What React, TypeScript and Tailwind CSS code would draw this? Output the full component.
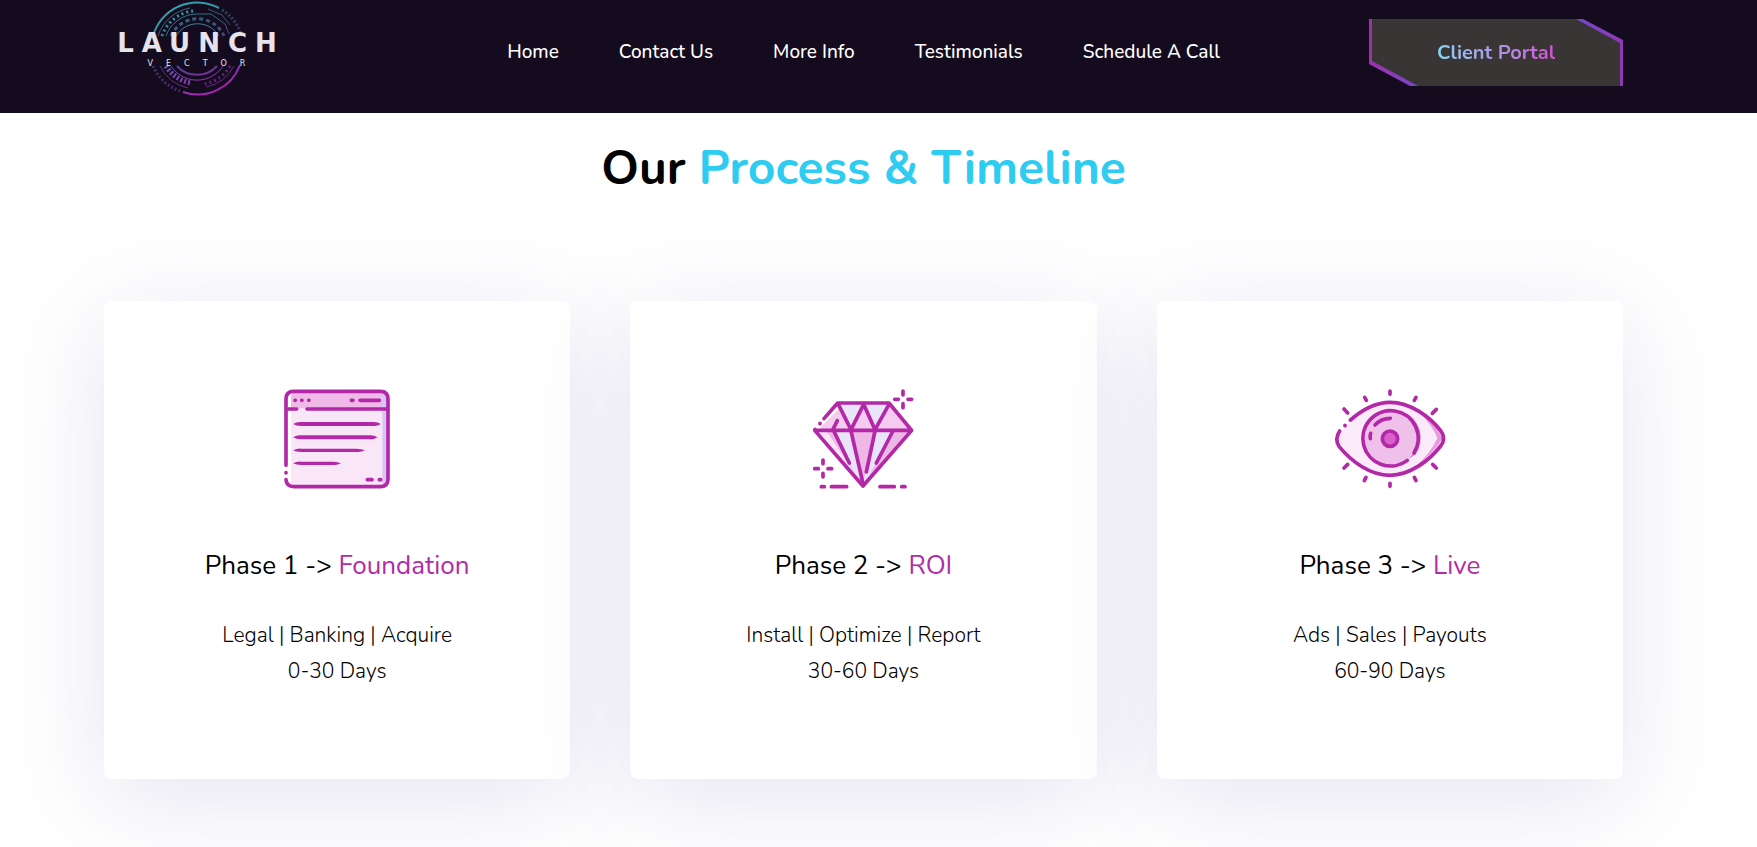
import type { ReactNode } from 'react';

interface Phase {
  title: string;
  highlight: string;
  steps: string;
  days: string;
  icon: ReactNode;
}

const NAV_LINKS = ['Home', 'Contact Us', 'More Info', 'Testimonials', 'Schedule A Call'];

function Logo() {
  return (
    <svg width="184" height="97" viewBox="0 0 184 97" role="img" aria-label="Launch Vector">
      <defs>
        <linearGradient id="ring" gradientUnits="userSpaceOnUse" x1="70" y1="4" x2="110" y2="94">
          <stop offset="0" stopColor="#2fa9b5" />
          <stop offset="0.3" stopColor="#3d7f9c" />
          <stop offset="0.6" stopColor="#6a4fb0" />
          <stop offset="1" stopColor="#b01fb8" />
        </linearGradient>
      </defs>
      <g fill="none" stroke="url(#ring)">
        {/* Top half */}
        <path d="M49 36a46 46 0 0 1 66-28" strokeWidth="2" />
        <path d="M118 10a45 45 0 0 1 19 24" strokeWidth="3" strokeDasharray="2 2" opacity="0.5" />
        <path d="M54 36a41 41 0 0 1 32-28M104 9l14 6 8 10" strokeWidth="1" opacity="0.7" />
        <path d="M58 36a37 37 0 0 1 31-25" strokeWidth="3" strokeDasharray="2 3" />
        <path d="M62 36a33 33 0 0 1 31-22h14l14 10 4 10" strokeWidth="1" opacity="0.8" />
        <path d="M67 36a29 29 0 0 1 53 0" strokeWidth="3" strokeDasharray="4 3" opacity="0.7" />
        <path d="M72 36a25 25 0 0 1 43 0" strokeWidth="1" />
        {/* Bottom half */}
        <path d="M136 65a45 45 0 0 1-57 27" strokeWidth="2" />
        <path d="M49 66a45 45 0 0 0 27 25" strokeWidth="3" strokeDasharray="2 2" opacity="0.5" />
        <path d="M130 66a41 41 0 0 1-28 21M56 66a41 41 0 0 0 28 22" strokeWidth="1" opacity="0.7" />
        <path d="M126 66a37 37 0 0 1-26 18" strokeWidth="3" strokeDasharray="2 3" opacity="0.6" />
        <path d="M62 66a36 36 0 0 0 26 17" strokeWidth="5" strokeDasharray="2 2" />
        <path d="M67 66a31 31 0 0 0 52 0" strokeWidth="1" />
        <path d="M73 66a27 27 0 0 0 40 0" strokeWidth="2" opacity="0.8" />
      </g>
      <g fill="#e6e3ec" textAnchor="middle" className="font-['DejaVu_Sans',sans-serif]">
        <text x="97" y="52" fontSize="26" className="font-bold tracking-[8px]">LAUNCH</text>
        <text x="99" y="66" fontSize="8" className="tracking-[13px]">VECTOR</text>
      </g>
    </svg>
  );
}

function PageIcon() {
  return (
    <svg width="140" height="130" viewBox="-10 0 420 390" fill="none" aria-hidden="true">
      <rect x="62" y="50" width="290" height="284" rx="18" fill="#f9e6f7" />
      <path d="M62 100V66q0-16 16-16h256q14 0 14 16v34z" fill="#efb9e8" />
      <path d="M336 56q16 0 16 16v236q0 18-16 22z" fill="#d5c8f8" />
      <g stroke="#b328a6" strokeWidth="11" strokeLinecap="round">
        <path d="M47 271V72q0-23 23-23h260q23 0 23 23v240q0 23-23 23H70q-21 0-23-21M47 293v1M50 102h29M110 102h240" />
        <path d="M74 76h1M94 76h1M115 76h1M243 76h5M269 76h58M291 314h14M327 314h4" />
      </g>
      <path
        d="M68 147q12-7 24-6h218q12 0 22 6-12 7-22 6H92q-14 0-24-6zM68 187q12-7 24-6h208q12 0 22 6-12 7-22 6H92q-14 0-24-6zM68 226q12-6 24-5h168q12 0 24 5-12 6-24 5H92q-14 0-24-5zM68 265q12-6 24-5h98q12 0 22 5-12 6-22 5H92q-14 0-24-5z"
        fill="#b328a6"
      />
    </svg>
  );
}

function DiamondIcon() {
  return (
    <svg width="140" height="130" viewBox="-6 0 420 390" fill="none" aria-hidden="true">
      <path d="M128 85h154l68 81-146 166L66 176l70-80z" fill="#eae4fa" />
      <path d="M135 98l33 66H70zM206 90l34 74h-70zM284 88l64 76H242z" fill="#f5cbef" />
      <path d="M70 168h46l70 140zM172 168h68l-36 158zM292 168h58L214 318z" fill="#eeb8e6" />
      <path d="M66 172l130 148-100-150z" fill="#fae6f8" />
      <g stroke="#b328a6" strokeWidth="11" strokeLinecap="round" strokeLinejoin="round">
        <path d="M87 131l41-47h154l68 82-146 167L59 166h291M75 145v1M60 163v1" />
        <path d="M130 88l38 76 38-76 34 76 42-76M127 137l-13 26 49 101M168 168l36 158M240 168l-26 123M294 168l-50 96" />
        <path d="M324 48v12M324 86v12M299 73h11M339 73h11M84 255v11M84 295v11M59 281h11M99 281h11" />
        <path d="M79 335h9M109 335h46M255 335h43M320 335h10" />
      </g>
    </svg>
  );
}

function EyeIcon() {
  return (
    <svg width="140" height="130" viewBox="0 0 420 390" fill="none" aria-hidden="true">
      <path d="M52 190C90 125 150 83 210 83s120 42 162 107c-42 65-102 110-162 110S90 255 52 190z" fill="#fbeaf9" />
      <path d="M290 105q54 34 78 85-24 42-90 92 52-42 74-92-12-38-62-85z" fill="#e79ade" />
      <circle cx="210" cy="190" r="82" fill="#eec0ea" />
      <path d="M250 110a92 92 0 0 1 15 143l22-15a86 86 0 0 0-37-128z" fill="#d77bd0" />
      <circle cx="210" cy="191" r="23" fill="#d860cc" />
      <g stroke="#b328a6" strokeWidth="11" strokeLinecap="round">
        <path d="M91 135C128 103 170 82 210 82c62 0 120 44 152 85q18 24 0 46c-35 44-92 88-152 88S94 259 57 214q-14-22 2-46M75 151v1" />
        <path d="M262 256a83 83 0 1 1 20-22" />
        <circle cx="210" cy="191" r="23" />
        <path d="M165 150q18-20 46-20M152 175q-3 8-1 16" />
        <path d="M210 48v10M210 325v9M134 67l5 9M288 67l-5 9M72 102l11 12M349 103l-12 12M83 268l-11 11M338 268l11 11M138 307l-5 10M283 307l5 10" />
      </g>
    </svg>
  );
}

const PHASES: Phase[] = [
  {
    title: 'Phase 1 ->',
    highlight: 'Foundation',
    steps: 'Legal | Banking | Acquire',
    days: '0-30 Days',
    icon: <PageIcon />,
  },
  {
    title: 'Phase 2 ->',
    highlight: 'ROI',
    steps: 'Install | Optimize | Report',
    days: '30-60 Days',
    icon: <DiamondIcon />,
  },
  {
    title: 'Phase 3 ->',
    highlight: 'Live',
    steps: 'Ads | Sales | Payouts',
    days: '60-90 Days',
    icon: <EyeIcon />,
  },
];

function PortalButton() {
  return (
    <button type="button" className="relative h-[67px] w-[254px] cursor-pointer">
      {/* Cut-corner frame behind the label */}
      <svg className="absolute inset-0 size-full" viewBox="0 0 254 67" fill="none" aria-hidden="true">
        <defs>
          <linearGradient id="cut-left" x1="0" y1="0" x2="1" y2="0">
            <stop offset="0" stopColor="#a030ac" />
            <stop offset="1" stopColor="#7448cc" />
          </linearGradient>
          <linearGradient id="cut-right" x1="0" y1="0" x2="1" y2="0">
            <stop offset="0" stopColor="#7448cc" />
            <stop offset="1" stopColor="#9038b4" />
          </linearGradient>
        </defs>
        <path d="M0 0h211l43 22v45H46L0 44z" fill="#383534" />
        <path d="M0 0h3v42l46 25h-8L0 45z" fill="url(#cut-left)" />
        <path d="M207 0h7l40 21v46h-3V24z" fill="url(#cut-right)" />
      </svg>
      <span className="relative bg-gradient-to-r from-[#84d3f5] via-[#a997e8] to-[#d04fd6] bg-clip-text text-[20px] font-bold text-transparent">
        Client Portal
      </span>
    </button>
  );
}

export default function App() {
  return (
    <div className="min-h-screen overflow-hidden bg-white font-['Nunito','Lato',sans-serif] text-black">
      <header className="grid h-[113px] grid-cols-[1fr_auto_1fr] items-start bg-[#140c1e] pr-[134px] pl-[104px]">
        <a href="#" className="justify-self-start">
          <Logo />
        </a>
        <nav className="flex h-[104px] items-center gap-[60px]">
          {NAV_LINKS.map((link) => (
            <a key={link} href="#" className="text-[19px] font-medium whitespace-nowrap text-white">
              {link}
            </a>
          ))}
        </nav>
        <div className="mt-[19px] justify-self-end">
          <PortalButton />
        </div>
      </header>

      <main className="pt-6 pr-[134px] pb-[68px] pl-[104px]">
        <h1 className="text-center text-[48px] leading-[62px] font-bold">
          Our <span className="text-[#2dccf0]">Process &amp; Timeline</span>
        </h1>

        <div className="mt-[102px] grid grid-cols-3 gap-[60px]">
          {PHASES.map((phase) => (
            <section
              key={phase.highlight}
              className="flex flex-col items-center rounded-lg bg-white pt-[74px] pb-[90px] text-center shadow-[0_20px_104px_rgba(75,60,150,0.14)]"
            >
              {phase.icon}
              <h2 className="mt-[43px] text-[26px] leading-[36px]">
                {phase.title} <span className="text-[#b12ca4]">{phase.highlight}</span>
              </h2>
              <p className="mt-[33px] text-[21px] leading-[36px] font-[350]">
                {phase.steps}
                <br />
                {phase.days}
              </p>
            </section>
          ))}
        </div>
      </main>
    </div>
  );
}
